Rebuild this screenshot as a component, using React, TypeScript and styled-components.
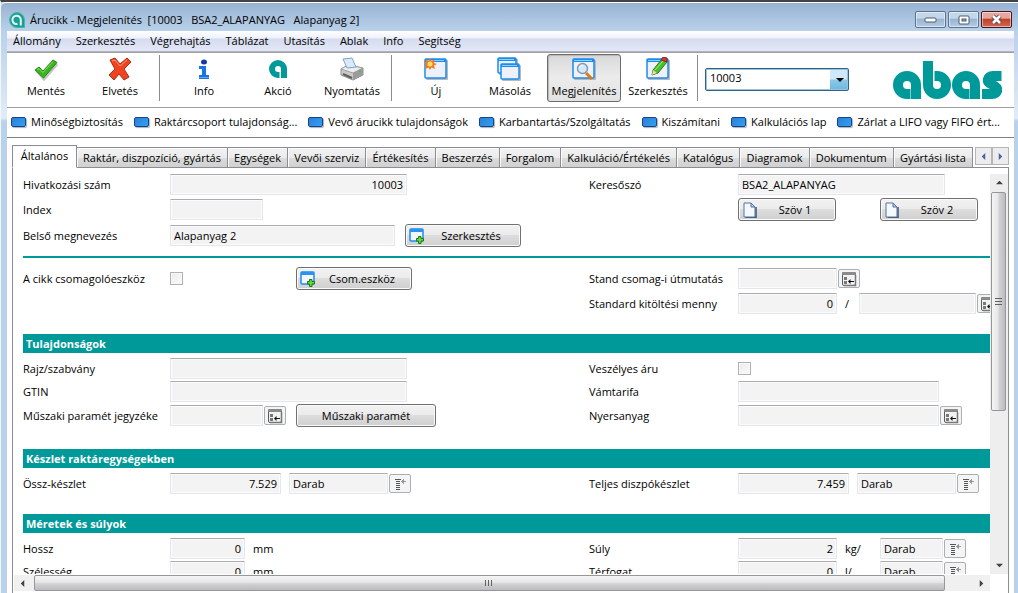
import React from "react";
import styled, { createGlobalStyle, css } from "styled-components";

const TEAL = "#009999";
const FRAME = "#b9d1ea";

const GlobalStyle = createGlobalStyle`
  *, *::before, *::after { box-sizing: border-box; }
  body { margin: 0; background: #fff; }
  body, button, input, select {
    font-family: "Open Sans", "Noto Sans", sans-serif;
    font-size: 11px;
    line-height: 16px;
    color: #000;
  }
  button, input, select { margin: 0; padding: 0; }
`;

/* ---------- window frame ---------- */

const Window = styled.div`
  display: flex;
  flex-direction: column;
  height: 100vh;
  border-top: 2px solid #434343;
  border-left: 1px solid #f2f7fc;
  background: linear-gradient(${FRAME} 30px, #e1ecf8 116px, ${FRAME} 119px);
  overflow: hidden;
`;

const TitleBar = styled.header`
  display: flex;
  align-items: center;
  gap: 5px;
  flex: none;
  height: 29px;
  padding: 5px 6px 0 8px;
  border-top: 1px solid #fff;
  border-top-left-radius: 5px;
  background: linear-gradient(#98b3d2, #b9d1ea);
`;

const Title = styled.h1`
  flex: 1;
  margin: 0;
  font-size: 11px;
  font-weight: 400;
  white-space: pre;
`;

const WindowButtons = styled.div`
  display: flex;
  gap: 2px;
`;

const WindowButton = styled.button<{ $danger?: boolean }>`
  display: flex;
  align-items: center;
  justify-content: center;
  width: 31px;
  height: 17px;
  border: 1px solid ${(p) => (p.$danger ? "#4a1420" : "#5b7391")};
  border-radius: 2px;
  background: ${(p) =>
    p.$danger
      ? "linear-gradient(#e6a79c 0 40%, #c0422a 50%, #cf6a55)"
      : "linear-gradient(#c3d6ea 0 40%, #9ab5d2 50%, #b4cbe4)"};
  box-shadow: inset 0 0 0 1px rgba(255, 255, 255, 0.5);
`;

const Client = styled.div`
  display: flex;
  flex-direction: column;
  flex: 1;
  min-height: 0;
  margin: 0 4px 0 6px;
  background: #fff;
`;

/* ---------- menu and toolbar ---------- */

const MenuBar = styled.nav`
  display: flex;
  align-items: center;
  gap: 15px;
  flex: none;
  height: 21px;
  padding: 0 6px;
  background: linear-gradient(#fff, #eef1fa 37%, #d5dbee 38%, #e1e6f6 90%);
  border-bottom: 1px solid #b4b4bc;
`;

const MenuItem = styled.button`
  border: 0;
  background: none;
  white-space: nowrap;
`;

const ToolBar = styled.div`
  display: flex;
  align-items: center;
  flex: none;
  height: 56px;
  padding: 0 12px 0 2px;
  border-top: 1px solid #a0a0a0;
  border-bottom: 1px solid #a0a0a0;
`;

const ToolGroup = styled.div`
  display: flex;
  align-items: center;
  flex: none;
  padding-bottom: 4px;
`;

const ToolButton = styled.button<{ $pressed?: boolean }>`
  display: flex;
  flex-direction: column;
  align-items: center;
  justify-content: center;
  gap: 2px;
  flex: none;
  width: 74px;
  height: 48px;
  border: 1px solid ${(p) => (p.$pressed ? "#6c6c6c" : "transparent")};
  border-radius: 3px;
  white-space: nowrap;
  background: ${(p) => (p.$pressed ? "linear-gradient(#d9d9d9, #ececec 50%, #e2e2e2)" : "none")};
  box-shadow: ${(p) => (p.$pressed ? "inset 1px 1px 1px #b5b5b5" : "none")};

  svg {
    height: 24px;
  }
`;

const ToolDivider = styled.span`
  flex: none;
  width: 1px;
  height: 46px;
  margin: 0 7px 0 2px;
  background: #8c8c8c;
`;

const Combo = styled.div`
  position: relative;
  flex: none;
  width: 144px;
  height: 23px;
  margin-bottom: 2px;
  border: 1px solid #2f6488;
  border-radius: 2px;
  background: linear-gradient(#cfe9f8 0 48%, #8ac9ea 52%, #6db8e0) right / 18px 100% no-repeat, #fff;
  box-shadow: inset 0 0 0 1px #9cc3dc;

  select {
    display: block;
    width: 100%;
    height: 100%;
    padding: 0 20px 2px 4px;
    border: 0;
    outline: 0;
    background: none;
    appearance: none;
  }

  svg {
    position: absolute;
    right: 4px;
    top: 7px;
    pointer-events: none;
  }
`;

const LogoSlot = styled.div`
  margin-left: auto;
  height: 38px;
`;

const LinkBar = styled.nav`
  display: flex;
  align-items: center;
  gap: 11px;
  flex: none;
  height: 30px;
  padding: 0 4px 2px;
  border-bottom: 1px solid #808080;
  overflow: hidden;
`;

const QuickLink = styled.a`
  display: flex;
  align-items: center;
  gap: 5px;
  color: #000;
  text-decoration: none;
  white-space: nowrap;

  &::before {
    content: "";
    width: 15px;
    height: 10px;
    border: 1px solid #17418f;
    border-radius: 2px;
    background: linear-gradient(135deg, #2d7fd6, #2fa2f2);
    box-shadow: 1px 1px 1px #b0b0b0;
  }
`;

/* ---------- tabs ---------- */

const TabStrip = styled.div`
  display: flex;
  align-items: flex-end;
  flex: none;
  height: 30px;
  padding: 0 5px;
`;

const Tab = styled.button<{ $active?: boolean }>`
  flex: 1 1 auto;
  height: 21px;
  padding: 0 5px;
  border: 1px solid #8c8c94;
  border-left-width: 0;
  background: linear-gradient(#f2f2f2, #ebebeb 50%, #dcdcdc 51%, #d0d0d0);
  box-shadow: inset 1px 1px 0 #fbfbfb;
  white-space: nowrap;

  ${(p) =>
    p.$active &&
    css`
      flex: none;
      width: 65px;
      height: 23px;
      padding-bottom: 2px;
      border-left-width: 1px;
      border-bottom-color: #fff;
      background: #fff;
    `}
`;

const TabScroller = styled.div`
  display: flex;
  flex: none;
  align-self: flex-end;
  height: 21px;
  padding: 0 0 2px 2px;
  border-bottom: 1px solid #8c8c94;

  button {
    display: flex;
    align-items: center;
    justify-content: center;
    width: 17px;
    height: 18px;
    border: 1px solid #b4b4bc;
    background: #ececec;
  }
`;

const TabPage = styled.main`
  display: grid;
  grid-template-columns: minmax(0, 1fr) 18px;
  grid-template-rows: minmax(0, 1fr) 17px;
  flex: 1;
  min-height: 0;
  margin: 0 5px;
  padding-bottom: 2px;
  border: solid #8c8c94;
  border-width: 0 1px;
`;

/* ---------- form ---------- */

const FormArea = styled.form`
  padding: 6px 0 0 10px;
  overflow: hidden;
`;

const Group = styled.section<{ $gap: number; $top: number; $bottom: number }>`
  display: flex;
  flex-direction: column;
  gap: ${(p) => p.$gap}px;
  padding: ${(p) => p.$top}px 0 ${(p) => p.$bottom}px;
`;

const Rule = styled.hr`
  height: 2px;
  margin: 0;
  border: 0;
  background: ${TEAL};
`;

const SectionTitle = styled.h2`
  height: 19px;
  margin: 0;
  padding: 2px 3px;
  font-size: 11px;
  font-weight: 700;
  color: #fff;
  background: ${TEAL};
`;

const Row = styled.div`
  display: grid;
  grid-template-columns: 147px minmax(0, 419fr) 149px minmax(0, 252fr);
  align-items: center;
  min-height: 21px;
`;

const Label = styled.label`
  white-space: nowrap;
`;

const Cell = styled.div<{ $gap?: number }>`
  display: flex;
  align-items: center;
  gap: ${(p) => p.$gap ?? 8}px;
`;

const FieldSlot = styled.div<{ $width?: number }>`
  display: flex;
  align-items: center;
  gap: 1px;
  flex: none;
  width: ${(p) => (p.$width ? `${p.$width}px` : "auto")};
`;

const TextField = styled.input<{ $width: number; $right?: boolean }>`
  flex: none;
  width: ${(p) => p.$width}px;
  height: 21px;
  padding: 0 3px;
  border: 1px solid #e3e6ee;
  border-top-color: #ababb3;
  border-radius: 1px;
  outline: 0;
  background: #f3f3f3;
  box-shadow: inset 0 0 0 1px #fbfbfb;
  text-align: ${(p) => (p.$right ? "right" : "left")};
`;

const CheckBox = styled.input.attrs({ type: "checkbox" })`
  width: 13px;
  height: 13px;
  border: 1px solid #b1b1b1;
  appearance: none;
  background: linear-gradient(135deg, #ececec, #fafafa);
  box-shadow: inset 0 0 0 1px #f8f8f8;
`;

const Unit = styled.span<{ $width: number }>`
  flex: none;
  width: ${(p) => p.$width}px;
  white-space: nowrap;
`;

const PushButton = styled.button<{ $width: number }>`
  display: flex;
  align-items: center;
  flex: none;
  width: ${(p) => p.$width}px;
  height: 23px;
  padding: 0 3px;
  border: 1px solid #707070;
  border-radius: 3px;
  background: linear-gradient(#f2f2f2, #ebebeb 49%, #dddddd 50%, #cfcfcf);
  box-shadow: inset 0 0 0 1px #fafafa;

  span {
    flex: 1;
    text-align: center;
  }
`;

const LookupButton = styled.button`
  display: flex;
  align-items: center;
  justify-content: center;
  flex: none;
  width: 22px;
  height: 19px;
  border: 1px solid #a9b0b4;
  border-radius: 2px;
  background: #f4f4f4;
`;

/* ---------- scroll bars ---------- */

const ScrollBar = styled.div<{ $vertical?: boolean }>`
  display: flex;
  flex-direction: ${(p) => (p.$vertical ? "column" : "row")};
  margin: ${(p) => (p.$vertical ? "6px 0 0 0" : "1px 0 0 1px")};
  background: ${(p) => (p.$vertical ? "#eeeeee" : "#f0f0f0")};
`;

const ScrollArrow = styled.button`
  display: flex;
  align-items: center;
  justify-content: center;
  align-self: center;
  flex: none;
  width: 17px;
  height: 17px;
  border: 0;
  background: none;
`;

const ScrollTrack = styled.div<{ $vertical?: boolean }>`
  display: flex;
  flex-direction: ${(p) => (p.$vertical ? "column" : "row")};
  flex: 1;
  min-width: 0;
  min-height: 0;
  padding: ${(p) => (p.$vertical ? "1px 2px 0 1px" : "0 0 0 3px")};
`;

const ScrollThumb = styled.div<{ $vertical?: boolean; $share: number }>`
  display: flex;
  align-items: center;
  justify-content: center;
  flex: 0 0 ${(p) => p.$share}%;
  border: 1px solid #979797;
  border-radius: 2px;
  background: linear-gradient(
    ${(p) => (p.$vertical ? "90deg" : "180deg")},
    #f5f5f5,
    #e6e6e6 45%,
    #d2d2d4 55%,
    #bcbcc0
  );
`;

/* ---------- drawings ---------- */

type Direction = "up" | "down" | "left" | "right";

function Triangle({ to, color = "#404040", size = 7 }: { to: Direction; color?: string; size?: number }) {
  const points = {
    up: "0,6 4,2 8,6",
    down: "0,2 4,6 8,2",
    left: "6,0 2,4 6,8",
    right: "2,0 6,4 2,8",
  }[to];
  return (
    <svg width={size} height={size} viewBox="0 0 8 8" aria-hidden="true">
      <polygon points={points} fill={color} />
    </svg>
  );
}

function Grip({ vertical }: { vertical?: boolean }) {
  return (
    <svg width="8" height="8" viewBox="0 0 8 8" aria-hidden="true" shapeRendering="crispEdges">
      <path
        d={vertical ? "M0 .5H7M0 3.5H7M0 6.5H7" : "M.5 1V7M3.5 1V7M6.5 1V7"}
        stroke="#606060"
      />
    </svg>
  );
}

function AbasLogo() {
  return (
    <svg width="109" height="38" viewBox="0 0 109 38" role="img" aria-label="abas">
      <g fill="none" stroke={TEAL} strokeWidth="10">
        <path d="M17.500 33H14A9 9 0 1 1 23 24V38" />
        <path d="M35 0V24A9 9 0 1 0 44 15H41.500" />
        <path d="M76.500 33H73A9 9 0 1 1 82 24V38" />
        <path d="M108.500 15H100C93.500 15 93.500 21 98 23L101.500 25C106 28 104.500 33 99 33H89" />
      </g>
    </svg>
  );
}

function AbasMark() {
  return (
    <svg width="20" height="20" viewBox="0 0 20 20" aria-hidden="true">
      <path d="M11.500 16H10A6 6 0 1 1 16 10V19" fill="none" stroke={TEAL} strokeWidth="6" />
    </svg>
  );
}

function AppIcon() {
  return (
    <svg width="16" height="16" viewBox="0 0 16 16" aria-hidden="true">
      <path d="M8 .5A7.500 7.500 0 1 0 8 15.500H15.500V8A7.500 7.500 0 0 0 8 .5Z" fill="#18a093" stroke="#4bb5ab" />
      <path d="M8.500 12A4.200 4.200 0 1 1 11.800 8V13.500" fill="none" stroke="#e8f6f5" strokeWidth="2" />
    </svg>
  );
}

function CheckIcon() {
  return (
    <svg width="24" height="22" viewBox="0 0 24 22" aria-hidden="true">
      <path d="M3 13L10 21L23 6" fill="none" stroke="#c4c4c4" strokeWidth="3" />
      <path d="M1 12L5 9L9 13L19 2L23 4.500L9.500 20Z" fill="#3cb521" stroke="#218c12" strokeLinejoin="round" />
      <path d="M3 12L5 10.500L9 14.500L19 3.500" fill="none" stroke="#86dc66" />
    </svg>
  );
}

function CrossIcon() {
  return (
    <svg width="24" height="24" viewBox="0 0 24 24" aria-hidden="true">
      <path
        d="M2 3L7 1L12 7L19 1L23 5L16 12L21 20L16 23L11 17L6 23L1 18L7 12Z"
        fill="#ee4420"
        stroke="#b42a12"
        strokeLinejoin="round"
      />
      <path d="M4 4L7 3L12 9L19 3" fill="none" stroke="#ff9a78" />
    </svg>
  );
}

function InfoIcon() {
  return (
    <svg width="14" height="22" viewBox="0 0 14 22" aria-hidden="true">
      <ellipse cx="7" cy="4" rx="3" ry="2.500" fill="#1539a4" />
      <path d="M2 8H9V17H12V21H2V17H5V11H2Z" fill="#1c74e0" />
      <path d="M2 19.500H12" stroke="#5aa9f7" />
    </svg>
  );
}

function PrinterIcon() {
  return (
    <svg width="26" height="24" viewBox="0 0 26 24" aria-hidden="true">
      <path d="M2 12L9 8L24 11V18L14 23L2 18Z" fill="#c9c9c9" stroke="#8f8f8f" />
      <path d="M2 12L9 8L24 11L14 16Z" fill="#ededed" stroke="#a0a0a0" />
      <path d="M4 2L13 1L17 10L8 11Z" fill="#d8eafc" stroke="#7fa3c8" />
      <path d="M14 16V23L24 18V11Z" fill="#9b9b9b" />
      <path d="M4 17L13 21" stroke="#5e5e5e" strokeWidth="2" />
      <circle cx="21" cy="14" r="1" fill="#39c636" />
    </svg>
  );
}

function Pane({ x = 0, y = 0, w = 22, h = 20 }: { x?: number; y?: number; w?: number; h?: number }) {
  return (
    <g>
      <rect x={x + 2} y={y + 2} width={w} height={h} rx="1" fill="#b9b9b9" />
      <rect x={x + 1} y={y + 1} width={w - 1} height={h - 1} rx="1" fill="#eef0fb" stroke="#1a8cf0" strokeWidth="1.500" />
      <rect x={x + 1} y={y + 1} width={w - 1} height="3" fill="#1a8cf0" />
      <path d={`M${x + 2} ${y + 2.5}H${x + w - 2}`} stroke="#8fd0ff" />
    </g>
  );
}

function WindowIcon({ kind }: { kind: "new" | "copy" | "view" | "edit" }) {
  return (
    <svg width="26" height="24" viewBox="0 0 26 24" aria-hidden="true">
      {kind === "copy" ? (
        <>
          <Pane w={19} h={16} />
          <Pane x={3} y={6} w={19} h={16} />
        </>
      ) : (
        <Pane x={1} y={1} />
      )}
      {kind === "new" && (
        <>
          <path
            d="M7 1L8.500 4L11.500 2.500L11 6L14 7L11 8.500L12 12L8.500 10.500L7 13L5.500 10.500L2.500 12L3 8.500L1 7L3 5.500L2.500 2.500L5.500 4Z"
            fill="#f47a20"
          />
          <circle cx="7" cy="7" r="2.500" fill="#ffdf6a" />
        </>
      )}
      {kind === "view" && (
        <>
          <path d="M15 16L21 22" stroke="#e07818" strokeWidth="3" />
          <circle cx="11.500" cy="11.500" r="5" fill="#cfeafc" stroke="#8a98a8" strokeWidth="1.500" />
          <path d="M8.500 11A3 3 0 0 1 11.500 8.500" fill="none" stroke="#fff" />
        </>
      )}
      {kind === "edit" && (
        <>
          <path d="M8 13L17 2L22 5L13 16L7 18Z" fill="#4cc02c" stroke="#2a7d18" />
          <path d="M10 13L18 4" stroke="#a4ec82" />
          <path d="M16 3L18 0L22 1L22 5Z" fill="#d23a32" stroke="#8c2420" />
          <path d="M8 13L7 18L12 16Z" fill="#f4d9a4" />
        </>
      )}
    </svg>
  );
}

function AddWindowIcon() {
  return (
    <svg width="16" height="16" viewBox="0 0 16 16" aria-hidden="true">
      <rect x="1" y="1" width="13" height="12" rx="1" fill="#f3f4fc" stroke="#1a8cf0" strokeWidth="1.500" />
      <rect x="1" y="1" width="13" height="3" fill="#2b93ee" />
      <path d="M9.500 8.500H12V10.500H14.500V13H12V15.500H9.500V13H7.500V10.500H9.500Z" fill="#69d840" stroke="#1a7a12" />
    </svg>
  );
}

function PageIcon() {
  return (
    <svg width="16" height="16" viewBox="0 0 16 16" aria-hidden="true">
      <path d="M3.500 15.500H14V5" fill="none" stroke="#3a5276" strokeWidth="1.500" />
      <path d="M2 1H9L13 5V15H2Z" fill="#f4f8ff" stroke="#5572a0" />
      <path d="M9 1V5H13Z" fill="#bcd0ec" stroke="#5572a0" />
    </svg>
  );
}

function PickIcon() {
  return (
    <svg width="16" height="16" viewBox="0 0 16 16" aria-hidden="true">
      <rect x="1.500" y="1.500" width="13" height="13" rx="1.500" fill="#f2f2f2" stroke="#5c5c5c" />
      <rect x="1" y="1" width="14" height="3" rx="1" fill="#8a8a8a" />
      <path d="M14.500 4V14.500H3" fill="none" stroke="#777" strokeWidth="1.500" />
      <rect x="3" y="6" width="3" height="3" fill="#777" />
      <rect x="3" y="10" width="3" height="3" fill="#777" />
      <path d="M8 10.500H13" stroke="#111" />
      <path d="M7 10.500L9.500 8V13Z" fill="#111" />
    </svg>
  );
}

function ListIcon() {
  return (
    <svg width="14" height="14" viewBox="0 0 14 14" aria-hidden="true" shapeRendering="crispEdges">
      <path d="M2 2.500H8M3 4.500H7M3 6.500H7M3 8.500H7M3 10.500H7M3 12.500H7" stroke="#555" />
      <path d="M8 4.500H13M9.500 3V6M10.500 2V7" stroke="#999" />
    </svg>
  );
}

/* ---------- composed parts ---------- */

function Lookup({ kind = "pick", name }: { kind?: "pick" | "list"; name: string }) {
  return (
    <LookupButton type="button" aria-label={name}>
      {kind === "pick" ? <PickIcon /> : <ListIcon />}
    </LookupButton>
  );
}

interface FieldProps {
  id?: string;
  name?: string;
  width: number;
  value?: string;
  right?: boolean;
  lookup?: "pick" | "list";
}

function Field({ id, name, width, value = "", right, lookup }: FieldProps) {
  return (
    <FieldSlot>
      <TextField id={id} aria-label={name} $width={width} $right={right} defaultValue={value} readOnly />
      {lookup && <Lookup kind={lookup} name="Kiválasztás" />}
    </FieldSlot>
  );
}

function Scroller({ vertical, share }: { vertical?: boolean; share: number }) {
  return (
    <ScrollBar $vertical={vertical}>
      <ScrollArrow type="button" aria-label={vertical ? "Fel" : "Balra"}>
        <Triangle to={vertical ? "up" : "left"} />
      </ScrollArrow>
      <ScrollTrack $vertical={vertical}>
        <ScrollThumb $vertical={vertical} $share={share}>
          <Grip vertical={vertical} />
        </ScrollThumb>
      </ScrollTrack>
      <ScrollArrow type="button" aria-label={vertical ? "Le" : "Jobbra"}>
        <Triangle to={vertical ? "down" : "right"} />
      </ScrollArrow>
    </ScrollBar>
  );
}

const MENUS = ["Állomány", "Szerkesztés", "Végrehajtás", "Táblázat", "Utasítás", "Ablak", "Info", "Segítség"];

const LINKS = [
  "Minőségbiztosítás",
  "Raktárcsoport tulajdonság...",
  "Vevő árucikk tulajdonságok",
  "Karbantartás/Szolgáltatás",
  "Kiszámítani",
  "Kalkulációs lap",
  "Zárlat a LIFO vagy FIFO ért...",
];

const TABS = [
  "Általános",
  "Raktár, diszpozíció, gyártás",
  "Egységek",
  "Vevői szerviz",
  "Értékesítés",
  "Beszerzés",
  "Forgalom",
  "Kalkuláció/Értékelés",
  "Katalógus",
  "Diagramok",
  "Dokumentum",
  "Gyártási lista",
];

const TOOLS: { label: string; icon: React.ReactNode; pressed?: boolean }[][] = [
  [
    { label: "Mentés", icon: <CheckIcon /> },
    { label: "Elvetés", icon: <CrossIcon /> },
  ],
  [
    { label: "Info", icon: <InfoIcon /> },
    { label: "Akció", icon: <AbasMark /> },
    { label: "Nyomtatás", icon: <PrinterIcon /> },
  ],
  [
    { label: "Új", icon: <WindowIcon kind="new" /> },
    { label: "Másolás", icon: <WindowIcon kind="copy" /> },
    { label: "Megjelenítés", icon: <WindowIcon kind="view" />, pressed: true },
    { label: "Szerkesztés", icon: <WindowIcon kind="edit" /> },
  ],
];

export default function App() {
  return (
    <>
      <GlobalStyle />
      <Window>
        <TitleBar>
          <AppIcon />
          <Title>{"Árucikk - Megjelenítés  [10003   BSA2_ALAPANYAG   Alapanyag 2]"}</Title>
          <WindowButtons>
            <WindowButton aria-label="Kis méret">
              <svg width="13" height="7" viewBox="0 0 13 7">
                <rect x="1" y="2" width="11" height="4" rx="1" fill="#fff" stroke="#4d5a6b" />
              </svg>
            </WindowButton>
            <WindowButton aria-label="Teljes méret">
              <svg width="12" height="10" viewBox="0 0 12 10">
                <rect x="1" y="1" width="10" height="8" rx="1" fill="#fff" stroke="#4d5a6b" />
                <rect x="4" y="4" width="4" height="2" fill="#9ab5d2" stroke="#4d5a6b" />
              </svg>
            </WindowButton>
            <WindowButton $danger aria-label="Bezárás">
              <svg width="13" height="11" viewBox="0 0 13 11">
                <path d="M3 2L10 9M10 2L3 9" stroke="#5b4a55" strokeWidth="4.500" />
                <path d="M3 2L10 9M10 2L3 9" stroke="#fff" strokeWidth="2.500" />
              </svg>
            </WindowButton>
          </WindowButtons>
        </TitleBar>

        <Client>
          <MenuBar>
            {MENUS.map((m) => (
              <MenuItem key={m}>{m}</MenuItem>
            ))}
          </MenuBar>

          <ToolBar>
            {TOOLS.map((group, i) => (
              <ToolGroup key={i}>
                {group.map((t) => (
                  <ToolButton key={t.label} $pressed={t.pressed}>
                    {t.icon}
                    {t.label}
                  </ToolButton>
                ))}
                <ToolDivider />
              </ToolGroup>
            ))}
            <Combo>
              <select aria-label="Azonosító" defaultValue="10003">
                <option>10003</option>
              </select>
              <Triangle to="down" color="#000" size={8} />
            </Combo>
            <LogoSlot>
              <AbasLogo />
            </LogoSlot>
          </ToolBar>

          <LinkBar>
            {LINKS.map((l) => (
              <QuickLink key={l} href="#">
                {l}
              </QuickLink>
            ))}
          </LinkBar>

          <TabStrip role="tablist">
            {TABS.map((t, i) => (
              <Tab key={t} role="tab" aria-selected={i === 0} $active={i === 0}>
                {t}
              </Tab>
            ))}
            <TabScroller>
              <button aria-label="Előző fülek">
                <Triangle to="left" color="#4661a8" />
              </button>
              <button aria-label="Következő fülek">
                <Triangle to="right" color="#4661a8" />
              </button>
            </TabScroller>
          </TabStrip>

          <TabPage>
            <FormArea>
              <Group $gap={3} $top={0} $bottom={9}>
                <Row>
                  <Label htmlFor="ref">Hivatkozási szám</Label>
                  <Cell>
                    <Field id="ref" width={237} value="10003" right />
                  </Cell>
                  <Label htmlFor="search">Keresőszó</Label>
                  <Cell>
                    <Field id="search" width={207} value="BSA2_ALAPANYAG" />
                  </Cell>
                </Row>
                <Row>
                  <Label htmlFor="index">Index</Label>
                  <Cell>
                    <Field id="index" width={93} />
                  </Cell>
                  <span />
                  <Cell $gap={44}>
                    <PushButton type="button" $width={98}>
                      <PageIcon />
                      <span>Szöv 1</span>
                    </PushButton>
                    <PushButton type="button" $width={98}>
                      <PageIcon />
                      <span>Szöv 2</span>
                    </PushButton>
                  </Cell>
                </Row>
                <Row>
                  <Label htmlFor="inner">Belső megnevezés</Label>
                  <Cell $gap={10}>
                    <Field id="inner" width={225} value="Alapanyag 2" />
                    <PushButton type="button" $width={116}>
                      <AddWindowIcon />
                      <span>Szerkesztés</span>
                    </PushButton>
                  </Cell>
                </Row>
              </Group>
              <Rule />
              <Group $gap={3} $top={9} $bottom={20}>
                <Row>
                  <Label htmlFor="pack">A cikk csomagolóeszköz</Label>
                  <Cell $gap={10}>
                    <FieldSlot $width={116}>
                      <CheckBox id="pack" />
                    </FieldSlot>
                    <PushButton type="button" $width={116}>
                      <AddWindowIcon />
                      <span>Csom.eszköz</span>
                    </PushButton>
                  </Cell>
                  <Label htmlFor="packins">Stand csomag-i útmutatás</Label>
                  <Cell>
                    <Field id="packins" width={99} lookup="pick" />
                  </Cell>
                </Row>
                <Row>
                  <span />
                  <span />
                  <Label htmlFor="fill">Standard kitöltési menny</Label>
                  <Cell>
                    <Field id="fill" width={99} value="0" right />
                    <Unit $width={6}>/</Unit>
                    <Field name="Kitöltési egység" width={117} lookup="pick" />
                  </Cell>
                </Row>
              </Group>

              <SectionTitle>Tulajdonságok</SectionTitle>
              <Group $gap={2} $top={5} $bottom={22}>
                <Row>
                  <Label htmlFor="drawing">Rajz/szabvány</Label>
                  <Cell>
                    <Field id="drawing" width={237} />
                  </Cell>
                  <Label htmlFor="danger">Veszélyes áru</Label>
                  <Cell>
                    <CheckBox id="danger" />
                  </Cell>
                </Row>
                <Row>
                  <Label htmlFor="gtin">GTIN</Label>
                  <Cell>
                    <Field id="gtin" width={237} />
                  </Cell>
                  <Label htmlFor="tariff">Vámtarifa</Label>
                  <Cell>
                    <Field id="tariff" width={201} />
                  </Cell>
                </Row>
                <Row>
                  <Label htmlFor="tech">Műszaki paramét jegyzéke</Label>
                  <Cell $gap={10}>
                    <Field id="tech" width={93} lookup="pick" />
                    <PushButton type="button" $width={140}>
                      <span>Műszaki paramét</span>
                    </PushButton>
                  </Cell>
                  <Label htmlFor="raw">Nyersanyag</Label>
                  <Cell>
                    <Field id="raw" width={201} lookup="pick" />
                  </Cell>
                </Row>
              </Group>

              <SectionTitle>Készlet raktáregységekben</SectionTitle>
              <Group $gap={2} $top={5} $bottom={20}>
                <Row>
                  <Label htmlFor="stock">Össz-készlet</Label>
                  <Cell>
                    <Field id="stock" width={111} value="7.529" right />
                    <Field name="Készlet egység" width={99} value="Darab" lookup="list" />
                  </Cell>
                  <Label htmlFor="avail">Teljes diszpókészlet</Label>
                  <Cell>
                    <Field id="avail" width={111} value="7.459" right />
                    <Field name="Diszpókészlet egység" width={99} value="Darab" lookup="list" />
                  </Cell>
                </Row>
              </Group>

              <SectionTitle>Méretek és súlyok</SectionTitle>
              <Group $gap={2} $top={5} $bottom={0}>
                <Row>
                  <Label htmlFor="length">Hossz</Label>
                  <Cell>
                    <Field id="length" width={75} value="0" right />
                    <Unit $width={27}>mm</Unit>
                  </Cell>
                  <Label htmlFor="weight">Súly</Label>
                  <Cell>
                    <Field id="weight" width={99} value="2" right />
                    <Unit $width={27}>kg/</Unit>
                    <Field name="Súly egység" width={63} value="Darab" lookup="list" />
                  </Cell>
                </Row>
                <Row>
                  <Label htmlFor="width">Szélesség</Label>
                  <Cell>
                    <Field id="width" width={75} value="0" right />
                    <Unit $width={27}>mm</Unit>
                  </Cell>
                  <Label htmlFor="volume">Térfogat</Label>
                  <Cell>
                    <Field id="volume" width={99} value="0" right />
                    <Unit $width={27}>l/</Unit>
                    <Field name="Térfogat egység" width={63} value="Darab" lookup="list" />
                  </Cell>
                </Row>
              </Group>
            </FormArea>
            <Scroller vertical share={60} />
            <Scroller share={97} />
          </TabPage>
        </Client>
      </Window>
    </>
  );
}
